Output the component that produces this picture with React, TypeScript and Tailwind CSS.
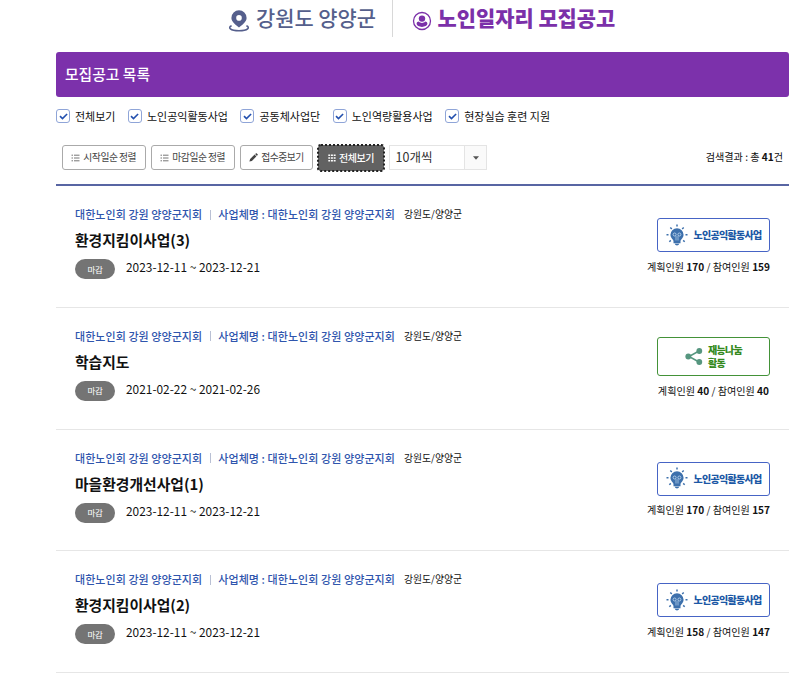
import React from "react";

type Kind = "public" | "talent";
interface Posting {
  title: string;
  period: string;
  kind: Kind;
  planned: number;
  joined: number;
}

const postings: Posting[] = [
  { title: "환경지킴이사업(3)", period: "2023-12-11 ~ 2023-12-21", kind: "public", planned: 170, joined: 159 },
  { title: "학습지도", period: "2021-02-22 ~ 2021-02-26", kind: "talent", planned: 40, joined: 40 },
  { title: "마을환경개선사업(1)", period: "2023-12-11 ~ 2023-12-21", kind: "public", planned: 170, joined: 157 },
  { title: "환경지킴이사업(2)", period: "2023-12-11 ~ 2023-12-21", kind: "public", planned: 158, joined: 147 },
];

const filters = ["전체보기", "노인공익활동사업", "공동체사업단", "노인역량활용사업", "현장실습 훈련 지원"];

function PinIcon() {
  return (
    <svg width="22" height="22" viewBox="0 0 22 22" fill="none">
      <path fillRule="evenodd" fill="#555f8c" d="M11 .3a7.600 7.600 0 0 0-7.600 7.600c0 4 4.600 6.800 7.600 9.600 3-2.800 7.600-5.600 7.600-9.600A7.600 7.600 0 0 0 11 .3Zm0 4.800a2.800 2.800 0 1 1 0 5.600a2.800 2.800 0 0 1 0-5.600Z" />
      <path d="M3.600 15.800C-.5 17.500 2 20.800 11 20.800s11.500-3.300 7.400-5" stroke="#555f8c" strokeWidth="1.600" />
    </svg>
  );
}

function PersonIcon() {
  return (
    <svg width="20" height="20" viewBox="0 0 20 20">
      <circle cx="10" cy="10" r="8.500" fill="none" stroke="#7b30a9" strokeWidth="1.300" />
      <circle cx="10" cy="7.600" r="3.200" fill="#7b30a9" />
      <path fill="#7b30a9" d="M4.600 12.600c0-1.300 1.100-2 2.300-2 .8 1 1.900 1.400 3.100 1.400s2.300-.4 3.100-1.400c1.200 0 2.300.7 2.300 2 0 2.200-2.600 3.300-5.400 3.300s-5.400-1.100-5.400-3.300Z" />
    </svg>
  );
}

function CheckBox() {
  return (
    <span className="flex h-[14px] w-[14px] items-center justify-center rounded-[3px] border border-[#8fa5d8] bg-white">
      <svg width="9" height="9" viewBox="0 0 9 9" fill="none">
        <path d="M1 4.100 3.500 6.600 8.100 2" stroke="#2350ae" strokeWidth="1.600" />
      </svg>
    </span>
  );
}

function ListIcon() {
  return (
    <svg width="9" height="8" viewBox="0 0 9 8" stroke="#666" strokeWidth="0.900">
      <path d="M.5 1.200H2M3 1.200h5.500M.5 4H2M3 4h5.500M.5 6.800H2M3 6.800h5.500" />
    </svg>
  );
}

function PencilIcon() {
  return (
    <svg width="9" height="9" viewBox="0 0 9 9" fill="#444">
      <path d="m.4 8.600.7-2.500 4.500-4.500 1.800 1.800-4.500 4.500ZM6.100 1.100l.8-.7c.3-.3.600-.3.900 0l.8.8c.3.300.3.600 0 .9l-.7.800Z" />
    </svg>
  );
}

function GridIcon() {
  return (
    <svg width="8" height="8" viewBox="0 0 8 8" fill="#fff">
      <path d="M.3.500h1.900v1.600H.3zM3 .5h1.900v1.600H3zM5.700.5h1.900v1.600H5.700zM.3 3.200h1.900v1.600H.3zM3 3.200h1.900v1.600H3zM5.700 3.200h1.900v1.600H5.700zM.3 5.900h1.900v1.600H.3zM3 5.900h1.900v1.600H3zM5.700 5.900h1.900v1.600H5.700z" />
    </svg>
  );
}

function BulbIcon() {
  return (
    <svg width="22" height="22" viewBox="0 0 22 22" fill="none">
      <path fill="#3d70ac" d="M11 4.200a6.600 6.600 0 0 0-6.600 6.600c0 2.300 1.400 3.600 2.500 4.900.4.500.6 1.100.6 1.600v1.900h7v-1.900c0-.5.200-1.100.6-1.600 1.100-1.300 2.500-2.600 2.500-4.900A6.600 6.600 0 0 0 11 4.200ZM8.800 19.800h4.400c-.3 1.100-1.200 1.700-2.200 1.700s-1.900-.6-2.200-1.700Z" />
      <path d="M10 16.500v-4.700M12 16.500v-4.700" stroke="#c5ddf4" strokeWidth=".7" />
      <circle cx="8.600" cy="10.500" r="1.500" stroke="#c5ddf4" strokeWidth=".8" />
      <circle cx="13.400" cy="10.500" r="1.500" stroke="#c5ddf4" strokeWidth=".8" />
      <path d="M11 .5v2M4.300 3.500l1.500 1.500M17.700 3.500l-1.500 1.500M.5 10.800h2M19.500 10.800h2M3.300 17.800l1.500-1.400M18.700 17.800l-1.500-1.400" stroke="#3d70ac" strokeWidth="1.500" />
    </svg>
  );
}

function ShareIcon() {
  return (
    <svg width="18" height="17" viewBox="0 0 18 17">
      <path d="M14 3 4 8.500 14 14" fill="none" stroke="#56967f" strokeWidth="1.500" />
      <g fill="#56967f">
        <circle cx="14.300" cy="3" r="2.900" />
        <circle cx="3.300" cy="8.500" r="2.900" />
        <circle cx="14.300" cy="14" r="2.900" />
      </g>
    </svg>
  );
}

function SortButton({ icon, label, className }: { icon: React.ReactNode; label: string; className: string }) {
  return (
    <button className={`flex h-[25px] items-center justify-center gap-[3px] rounded-[3px] border border-[#aaa] text-[9.800px] tracking-[-0.500px] text-[#444] ${className}`}>
      {icon}
      <span>{label}</span>
    </button>
  );
}

function KindBadge({ kind }: { kind: Kind }) {
  if (kind === "talent") {
    return (
      <div className="flex h-[39px] w-[113px] items-center justify-center gap-[5px] rounded-[3px] border border-[#439238] text-[10px] leading-[13.500px] font-black tracking-[-0.700px] text-[#348a20]">
        <ShareIcon />
        <span>재능나눔<br />활동</span>
      </div>
    );
  }
  return (
    <div className="flex h-[34px] w-[113px] items-center justify-center gap-[6px] rounded-[3px] border border-[#4664c5] pb-px text-[10px] font-black tracking-[-0.700px] text-[#1c58a5]">
      <BulbIcon />
      <span>노인공익활동사업</span>
    </div>
  );
}

function PostingRow({ item }: { item: Posting }) {
  return (
    <li className="flex h-[121.800px] justify-between border-b border-[#e6e6e6] pl-[19px] pr-[19px]">
      <div className="pt-[20px]">
        <p className="flex h-[17px] items-center whitespace-nowrap text-[11px] leading-[17px] font-medium text-[#2f55ad]">
          <span className="tracking-[0.060px]">대한노인회 강원 양양군지회</span>
          <span className="mx-[7.500px] h-[10px] w-px bg-[#b9c0d4]" />
          <span className="tracking-[0.080px]">사업체명 : 대한노인회 강원 양양군지회</span>
          <span className="ml-[9px] text-[9.800px] font-normal text-[#111]">강원도/양양군</span>
        </p>
        <h2 className="mt-[6px] text-[14.800px] leading-[22px] font-bold text-[#111]">{item.title}</h2>
        <div className="mt-[7px] flex h-[20px] items-center">
          <span className="mt-[2px] flex h-[20px] w-[40px] items-center justify-center rounded-full bg-[#747474] text-[8.500px] tracking-[-0.300px] text-white">마감</span>
          <span className="-mt-[2px] ml-[11px] text-[11.900px] leading-[18px] text-[#111]">{item.period}</span>
        </div>
      </div>
      <div className={`flex w-[124px] flex-col items-end ${item.kind === "talent" ? "pt-[29px]" : "pt-[32px]"}`}>
        <KindBadge kind={item.kind} />
        <p className={`whitespace-nowrap text-[10.100px] leading-[16px] text-[#111] ${item.kind === "talent" ? "mt-[7px] pr-px" : "mt-[6.500px]"}`}>
          계획인원 <b>{item.planned}</b> / 참여인원 <b>{item.joined}</b>
        </p>
      </div>
    </li>
  );
}

export default function App() {
  return (
    <div className="h-[673px] w-[800px] overflow-hidden bg-white pl-[56px] pr-[11px] font-['Noto_Sans_CJK_KR',sans-serif]">
      <header className="flex h-[52px] items-start pl-[172px]">
        <div className="flex h-[37px] w-[165px] items-center border-r border-[#d8d8d8] pb-[2px] text-[20.900px] text-[#555f8c]">
          <span className="mr-[6px] mt-[6px]"><PinIcon /></span>
          <span className="whitespace-nowrap font-medium">강원도 양양군</span>
        </div>
        <h1 className="flex h-[37px] items-center pb-[2px] pl-[19px] text-[20.900px] font-black text-[#7b30a9]">
          <span className="mr-[5.500px] mt-[6px]"><PersonIcon /></span>
          <span className="whitespace-nowrap">노인일자리 모집공고</span>
        </h1>
      </header>

      <div className="flex h-[45px] items-center rounded-[3px] bg-[#7c31ab] pl-[9px] text-[14.800px] font-medium text-white">모집공고 목록</div>

      <div className="flex h-[38px] items-center gap-[12.500px]">
        {filters.map((label) => (
          <label key={label} className="flex items-center gap-[5px] whitespace-nowrap text-[11px] text-[#111]">
            <CheckBox />
            <span>{label}</span>
          </label>
        ))}
      </div>

      <div className="flex h-[51px] items-start justify-between border-b-2 border-[#5865a3] pl-[6px] pr-[6px] pt-[9.500px]">
        <div className="flex items-center">
          <SortButton icon={<ListIcon />} label="시작일순 정렬" className="w-[83.500px]" />
          <SortButton icon={<ListIcon />} label="마감일순 정렬" className="ml-[5.500px] w-[83.500px]" />
          <SortButton icon={<PencilIcon />} label="접수중보기" className="ml-[5.500px] w-[73px]" />
          <button className="ml-[5px] flex h-[26px] w-[66px] items-center justify-center gap-[3px] rounded-[3px] bg-[#626262] text-[10px] font-medium tracking-[-0.500px] text-white outline-2 outline-dotted outline-[#222] -outline-offset-1">
            <GridIcon />
            <span>전체보기</span>
          </button>
          <div className="ml-[5px] flex h-[25px] w-[98px] items-center border border-[#e4e4e4] text-[12.500px] text-[#333]">
            <span className="flex-1 pb-px pl-[5.500px]">10개씩</span>
            <span className="flex h-full w-[22px] items-center justify-center border-l border-[#e4e4e4] bg-[#fafafa]">
              <svg width="6" height="4" viewBox="0 0 6 4"><path d="M0 .3h6L3 3.700z" fill="#555" /></svg>
            </span>
          </div>
        </div>
        <p className="whitespace-nowrap text-[10.100px] leading-[24px] text-[#111]">검색결과 : 총 <b>41</b>건</p>
      </div>

      <ul>
        {postings.map((item) => (
          <PostingRow key={item.title} item={item} />
        ))}
      </ul>
    </div>
  );
}
